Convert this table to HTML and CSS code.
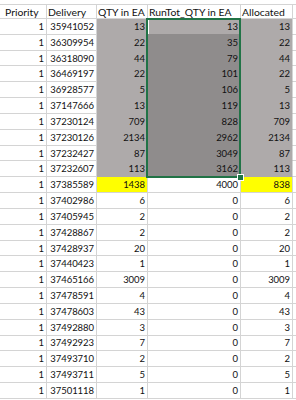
FILE: index.html
```html
<!DOCTYPE html>
<html>
<head>
<meta charset="utf-8">
<link rel="stylesheet" href="styles.css">
</head>
<body>
<div class="wrap">
  <div class="sheet">
    <div class="c h">Priority</div><div class="c h">Delivery</div><div class="c h">QTY in EA</div><div class="c h">RunTot_QTY in EA</div><div class="c h">Allocated</div><div class="c h f"></div>

    <div class="c n">1</div><div class="c n">35941052</div><div class="c n g">13</div><div class="c n act">13</div><div class="c n g">13</div><div class="c f"></div>
    <div class="c n">1</div><div class="c n">36309954</div><div class="c n g">22</div><div class="c n s">35</div><div class="c n g">22</div><div class="c f"></div>
    <div class="c n">1</div><div class="c n">36318090</div><div class="c n g">44</div><div class="c n s">79</div><div class="c n g">44</div><div class="c f"></div>
    <div class="c n">1</div><div class="c n">36469197</div><div class="c n g">22</div><div class="c n s">101</div><div class="c n g">22</div><div class="c f"></div>
    <div class="c n">1</div><div class="c n">36928577</div><div class="c n g">5</div><div class="c n s">106</div><div class="c n g">5</div><div class="c f"></div>
    <div class="c n">1</div><div class="c n">37147666</div><div class="c n g">13</div><div class="c n s">119</div><div class="c n g">13</div><div class="c f"></div>
    <div class="c n">1</div><div class="c n">37230124</div><div class="c n g">709</div><div class="c n s">828</div><div class="c n g">709</div><div class="c f"></div>
    <div class="c n">1</div><div class="c n">37230126</div><div class="c n g">2134</div><div class="c n s">2962</div><div class="c n g">2134</div><div class="c f"></div>
    <div class="c n">1</div><div class="c n">37232427</div><div class="c n g">87</div><div class="c n s">3049</div><div class="c n g">87</div><div class="c f"></div>
    <div class="c n">1</div><div class="c n">37232607</div><div class="c n g">113</div><div class="c n s">3162</div><div class="c n g">113</div><div class="c f"></div>
    <div class="c n">1</div><div class="c n">37385589</div><div class="c n y">1438</div><div class="c n">4000</div><div class="c n y">838</div><div class="c f"></div>
    <div class="c n">1</div><div class="c n">37402986</div><div class="c n">6</div><div class="c n">0</div><div class="c n">6</div><div class="c f"></div>
    <div class="c n">1</div><div class="c n">37405945</div><div class="c n">2</div><div class="c n">0</div><div class="c n">2</div><div class="c f"></div>
    <div class="c n">1</div><div class="c n">37428867</div><div class="c n">2</div><div class="c n">0</div><div class="c n">2</div><div class="c f"></div>
    <div class="c n">1</div><div class="c n">37428937</div><div class="c n">20</div><div class="c n">0</div><div class="c n">20</div><div class="c f"></div>
    <div class="c n">1</div><div class="c n">37440423</div><div class="c n">1</div><div class="c n">0</div><div class="c n">1</div><div class="c f"></div>
    <div class="c n">1</div><div class="c n">37465166</div><div class="c n">3009</div><div class="c n">0</div><div class="c n">3009</div><div class="c f"></div>
    <div class="c n">1</div><div class="c n">37478591</div><div class="c n">4</div><div class="c n">0</div><div class="c n">4</div><div class="c f"></div>
    <div class="c n">1</div><div class="c n">37478603</div><div class="c n">43</div><div class="c n">0</div><div class="c n">43</div><div class="c f"></div>
    <div class="c n">1</div><div class="c n">37492880</div><div class="c n">3</div><div class="c n">0</div><div class="c n">3</div><div class="c f"></div>
    <div class="c n">1</div><div class="c n">37492923</div><div class="c n">7</div><div class="c n">0</div><div class="c n">7</div><div class="c f"></div>
    <div class="c n">1</div><div class="c n">37493710</div><div class="c n">2</div><div class="c n">0</div><div class="c n">2</div><div class="c f"></div>
    <div class="c n">1</div><div class="c n">37493711</div><div class="c n">5</div><div class="c n">0</div><div class="c n">5</div><div class="c f"></div>
    <div class="c n">1</div><div class="c n">37501118</div><div class="c n">1</div><div class="c n">0</div><div class="c n">1</div><div class="c f"></div>
  </div>
  <div class="selection"></div>
  <div class="handle"></div>
</div>
</body>
</html>
```
FILE: styles.css
```css
html, body {
  margin: 0;
  padding: 0;
  background: #ffffff;
}
body {
  width: 296px;
  height: 400px;
  overflow: hidden;
  font-family: "Lato", "Open Sans", sans-serif;
  font-size: 10.4px;
  color: #111111;
}
.wrap {
  position: relative;
  padding-top: 4px;
}
.sheet {
  display: grid;
  grid-template-columns: 47px 50px 51px 93px 52px 1fr;
  grid-template-rows: 15px;
  grid-auto-rows: 15.83px;
}
.c {
  box-sizing: border-box;
  border-right: 1px solid #d4d4d4;
  border-bottom: 1px solid #d4d4d4;
  padding: 0 2px;
  display: flex;
  align-items: center;
  white-space: nowrap;
  overflow: hidden;
}
.h {
  border-top: 1px solid #d4d4d4;
  letter-spacing: 0;
  padding-left: 1px;
}
.h:first-child {
  padding-left: 5px;
}
.n {
  justify-content: flex-end;
  font-size: 9.5px;
  letter-spacing: -0.05px;
}
.f {
  border-right: none;
}
.g {
  background: #aeaaaa;
  border-bottom-color: #aeaaaa;
}
.s {
  background: #8f8c8c;
  border-bottom-color: #8f8c8c;
}
.act {
  background: #aeaaaa;
  border-bottom-color: #8f8c8c;
  box-shadow: inset 1px 1px 0 #ffffff, inset -1px 0 0 #ffffff;
}
.y {
  background: #ffff00;
}
.selection {
  position: absolute;
  left: 146px;
  top: 18px;
  width: 91px;
  height: 156px;
  border: 2px solid #217346;
  pointer-events: none;
}
.handle {
  position: absolute;
  left: 237px;
  top: 174px;
  width: 5px;
  height: 5px;
  background: #217346;
  border: 1px solid #ffffff;
}
```
